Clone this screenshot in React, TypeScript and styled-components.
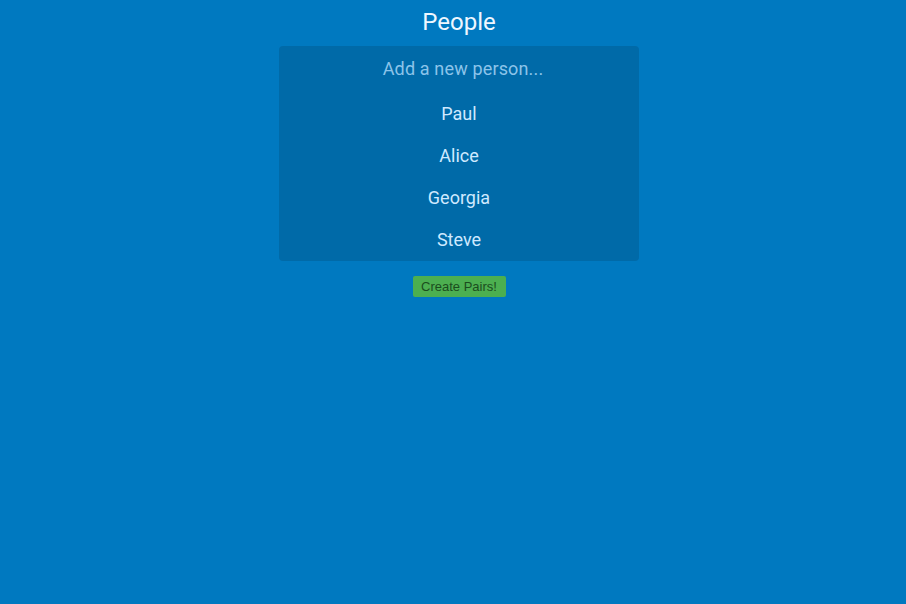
import React from "react";
import styled, { createGlobalStyle } from "styled-components";

const Global = createGlobalStyle`
  html, body { margin: 0; padding: 0; background: #0079c0; }
  body { font-family: Roboto, "Liberation Sans", sans-serif; }
`;

const Page = styled.div`
  min-height: 604px;
  background: #0079c0;
  display: flex;
  flex-direction: column;
  align-items: center;
  padding-left: 12px;
  box-sizing: border-box;
`;

const Title = styled.h1`
  margin: 0;
  padding-top: 8px;
  font-size: 24px;
  line-height: 28px;
  font-weight: 400;
  color: #eef7ff;
`;

const Panel = styled.div`
  margin-top: 10px;
  width: 360px;
  background: #006aa8;
  border-radius: 4px;
  padding: 2px 0 1px;
  box-sizing: border-box;
  display: flex;
  flex-direction: column;
`;

const Input = styled.input`
  box-sizing: border-box;
  height: 42px;
  border: none;
  background: transparent;
  text-align: center;
  font-family: Roboto, "Liberation Sans", sans-serif;
  font-size: 18px;
  letter-spacing: 0.15px;
  color: #d4ecff;
  outline: none;
  padding: 0 0 2px 8px;
  margin-bottom: 2px;
  &::placeholder { color: #8cc4ea; }
`;

const List = styled.ul`
  list-style: none;
  margin: 0;
  padding: 0;
`;

const Item = styled.li`
  height: 42px;
  display: flex;
  align-items: center;
  justify-content: center;
  font-size: 18px;
  color: #cfe9ff;
`;

const Button = styled.button`
  margin-top: 15px;
  width: 93px;
  height: 21px;
  background: #4caf50;
  border: none;
  border-radius: 2px;
  color: #1b4d1e;
  font-family: "Liberation Sans", Arial, sans-serif;
  font-size: 13px;
  padding: 0;
  cursor: pointer;
`;

const people = ["Paul", "Alice", "Georgia", "Steve"];

export default function App() {
  return (
    <>
      <Global />
      <Page>
        <Title>People</Title>
        <Panel>
          <Input placeholder="Add a new person..." />
          <List>
            {people.map((p) => (
              <Item key={p}>{p}</Item>
            ))}
          </List>
        </Panel>
        <Button>Create Pairs!</Button>
      </Page>
    </>
  );
}
